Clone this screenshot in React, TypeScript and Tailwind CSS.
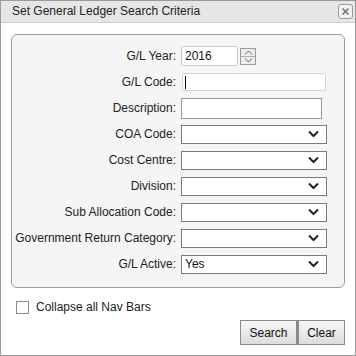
import React from "react";

const Chevron = () => (
  <svg width="11" height="7" viewBox="0 0 11 7" className="absolute right-[7px] top-1/2 -translate-y-1/2 pointer-events-none">
    <polyline points="1,1 5.5,5.5 10,1" fill="none" stroke="#222" strokeWidth="2" />
  </svg>
);

function SelectBox({ value = "" }: { value?: string }) {
  return (
    <div className="relative w-[146px] h-[19px] border border-[#7a7a7a] bg-white flex items-center pl-[3px] text-[12px] text-[#111]">
      {value}
      <Chevron />
    </div>
  );
}

export default function App() {
  const selectRows = ["COA Code:", "Cost Centre:", "Division:", "Sub Allocation Code:", "Government Return Category:"];

  return (
    <div
      className="w-[356px] h-[356px] border border-[#9a9a9a] bg-white flex flex-col text-[12px] text-[#222]"
      style={{ fontFamily: '"Liberation Sans", Arial, sans-serif' }}
    >
      {/* Title bar */}
      <div className="h-[22px] shrink-0 bg-[#e6e6e6] border-b border-[#cfcfcf] flex items-center justify-between pl-[11px] pr-[2px]">
        <span className="text-[12px] text-[#222] -mt-[1px]">Set General Ledger Search Criteria</span>
        <button className="w-[15px] h-[15px] border border-[#9c9c9c] rounded-[3px] bg-[#f2f2f2] flex items-center justify-center">
          <svg width="7" height="7" viewBox="0 0 7 7">
            <path d="M0.5 0.5 L6.5 6.5 M6.5 0.5 L0.5 6.5" stroke="#666" strokeWidth="1.4" />
          </svg>
        </button>
      </div>

      {/* Body */}
      <div className="flex-1 flex flex-col px-[10px] pt-[11px]">
        <div className="h-[254px] border border-[#9a9a9a] rounded-[6px] bg-[#f5f5f5] pt-[8px]">
          <div className="grid grid-cols-[164px_1fr] gap-x-[5px] auto-rows-[26px] items-center">
            <label className="text-right">G/L Year:</label>
            <div className="flex items-center gap-[2px]">
              <div className="w-[57px] h-[20px] border border-[#c8c8c8] rounded-[2px] bg-white flex items-center pl-[3px] text-[#111]">
                2016
              </div>
              <div className="w-[16px] h-[17px] border border-[#9a9a9a] bg-[#ececec] flex flex-col">
                <div className="flex-1 flex items-center justify-center border-b border-[#b0b0b0]">
                  <svg width="9" height="5" viewBox="0 0 9 5">
                    <polyline points="1,4.5 4.5,1 8,4.5" fill="none" stroke="#666" strokeWidth="1" />
                  </svg>
                </div>
                <div className="flex-1 flex items-center justify-center">
                  <svg width="9" height="5" viewBox="0 0 9 5">
                    <polyline points="1,0.5 4.5,4 8,0.5" fill="none" stroke="#666" strokeWidth="1" />
                  </svg>
                </div>
              </div>
            </div>

            <label className="text-right">G/L Code:</label>
            <div className="w-[144px] h-[18px] ml-[1px] border border-[#d4d4d4] rounded-[2px] bg-white flex items-center pl-[2px]">
              <span className="w-[1px] h-[13px] bg-black" />
            </div>

            <label className="text-right">Description:</label>
            <div className="w-[141px] h-[21px] border border-[#9a9a9a] bg-white" />

            {selectRows.map((label) => (
              <React.Fragment key={label}>
                <label className="text-right whitespace-nowrap">{label}</label>
                <SelectBox />
              </React.Fragment>
            ))}

            <label className="text-right">G/L Active:</label>
            <SelectBox value="Yes" />
          </div>
        </div>

        {/* Checkbox */}
        <div className="flex items-center mt-[10px] ml-[5px] gap-[7px]">
          <span className="w-[13px] h-[13px] border border-[#8a8a8a] bg-white" />
          <span>Collapse all Nav Bars</span>
        </div>

        {/* Buttons */}
        <div className="flex justify-end mt-[4px]">
          <button className="w-[57px] h-[25px] border border-[#8a8a8a] bg-gradient-to-b from-[#f7f7f7] to-[#dcdcdc] text-[12px] text-[#111]">
            Search
          </button>
          <button className="w-[48px] h-[25px] border border-[#8a8a8a] border-l-[2px] bg-gradient-to-b from-[#f7f7f7] to-[#dcdcdc] text-[12px] text-[#111]">
            Clear
          </button>
        </div>
      </div>
    </div>
  );
}
